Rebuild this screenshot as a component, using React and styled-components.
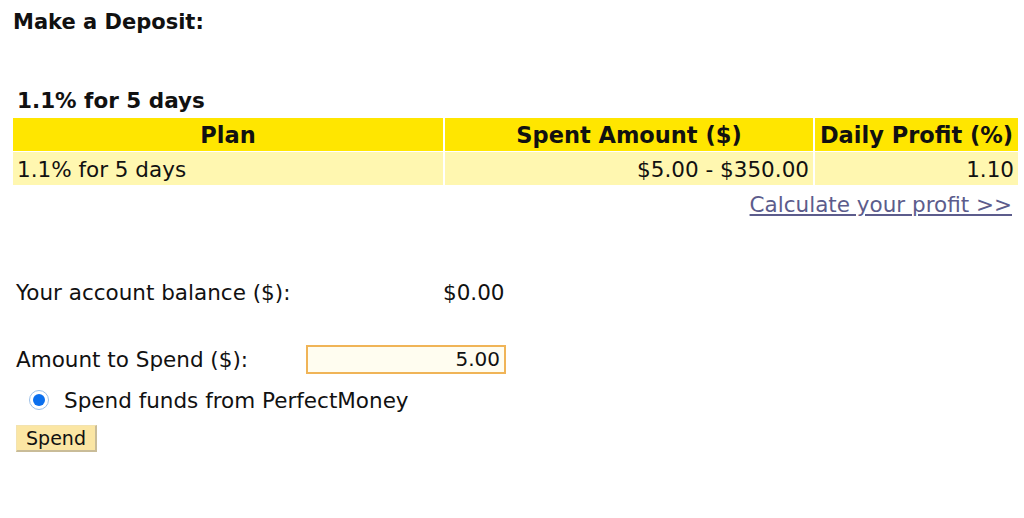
import React from 'react'
import styled, { createGlobalStyle } from 'styled-components'

const GlobalStyle = createGlobalStyle`
  body {
    margin: 0;
    background: #ffffff;
    font-family: "DejaVu Sans", Verdana, sans-serif;
    color: #111111;
  }
`

const Page = styled.div`
  width: 1024px;
  height: 518px;
  padding: 10px 6px 0 13px;
  box-sizing: border-box;
`

const Title = styled.h1`
  margin: 0;
  font-size: 21px;
  font-weight: bold;
  line-height: 24px;
`

const PlanName = styled.h2`
  margin: 55px 0 4px 4px;
  font-size: 21.5px;
  font-weight: bold;
  line-height: 24px;
`

const Table = styled.table`
  width: 1009px;
  table-layout: fixed;
  border-collapse: separate;
  border-spacing: 2px 1px;
  margin-left: -2px;
  font-size: 21.5px;
`

const Th = styled.th`
  background: #ffe600;
  height: 33px;
  padding: 0 3px;
  font-weight: bold;
  font-size: 22.5px;
  white-space: nowrap;
  text-align: center;
  width: ${(p) => p.w || 'auto'};
`

const Td = styled.td`
  background: #fff7b0;
  height: 31px;
  padding: 2px 4px 0;
  white-space: nowrap;
  text-align: ${(p) => p.align || 'left'};
`

const CalcRow = styled.div`
  display: flex;
  justify-content: flex-end;
  padding: 6px 6px 0 0;
  line-height: 26px;
`

const CalcLink = styled.a`
  color: #5c5c8c;
  font-size: 21.5px;
  text-decoration: underline;
`

const Form = styled.div`
  display: flex;
  flex-direction: column;
  margin-top: 59px;
  padding-left: 3px;
  font-size: 21.5px;
`

const Row = styled.div`
  display: grid;
  grid-template-columns: ${(p) => p.cols};
  align-items: center;
  height: 30px;
  margin-bottom: ${(p) => p.mb || '0'};
`

const Amount = styled.input`
  width: 200px;
  height: 29px;
  box-sizing: border-box;
  border: 2px solid #f0b457;
  background: #fffdf0;
  text-align: right;
  font-family: inherit;
  font-size: 20px;
  padding: 0 4px;
  color: #111;
  outline: none;
`

const RadioRow = styled.label`
  display: flex;
  align-items: center;
  gap: 15px;
  margin: 12px 0 0 13px;
  height: 28px;
`

const Radio = styled.span`
  width: 18px;
  height: 18px;
  border-radius: 50%;
  border: 1px solid #9cc0e8;
  display: flex;
  align-items: center;
  justify-content: center;
  background: #fff;
  &::after {
    content: '';
    width: 12px;
    height: 12px;
    border-radius: 50%;
    background: #0a6fee;
  }
`

const SpendButton = styled.button`
  align-self: flex-start;
  margin-top: 11px;
  width: 81px;
  height: 27px;
  background: #fbe6a4;
  border: 1px solid #f3e3b0;
  border-right: 2px solid #c9bc98;
  border-bottom: 2px solid #c9bc98;
  font-family: inherit;
  font-size: 19px;
  color: #111;
  padding: 0;
`

export default function App() {
  return (
    <Page>
      <GlobalStyle />
      <Title>Make a Deposit:</Title>
      <PlanName>1.1% for 5 days</PlanName>
      <Table>
        <thead>
          <tr>
            <Th w="424px">Plan</Th>
            <Th w="362px">Spent Amount ($)</Th>
            <Th>Daily Profit (%)</Th>
          </tr>
        </thead>
        <tbody>
          <tr>
            <Td>1.1% for 5 days</Td>
            <Td align="right">$5.00 - $350.00</Td>
            <Td align="right">1.10</Td>
          </tr>
        </tbody>
      </Table>
      <CalcRow>
        <CalcLink href="#">Calculate your profit &gt;&gt;</CalcLink>
      </CalcRow>
      <Form>
        <Row cols="427px auto" mb="37px">
          <span>Your account balance ($):</span>
          <span>$0.00</span>
        </Row>
        <Row cols="290px auto">
          <span>Amount to Spend ($):</span>
          <Amount defaultValue="5.00" />
        </Row>
        <RadioRow>
          <Radio />
          <span>Spend funds from PerfectMoney</span>
        </RadioRow>
        <SpendButton>Spend</SpendButton>
      </Form>
    </Page>
  )
}
